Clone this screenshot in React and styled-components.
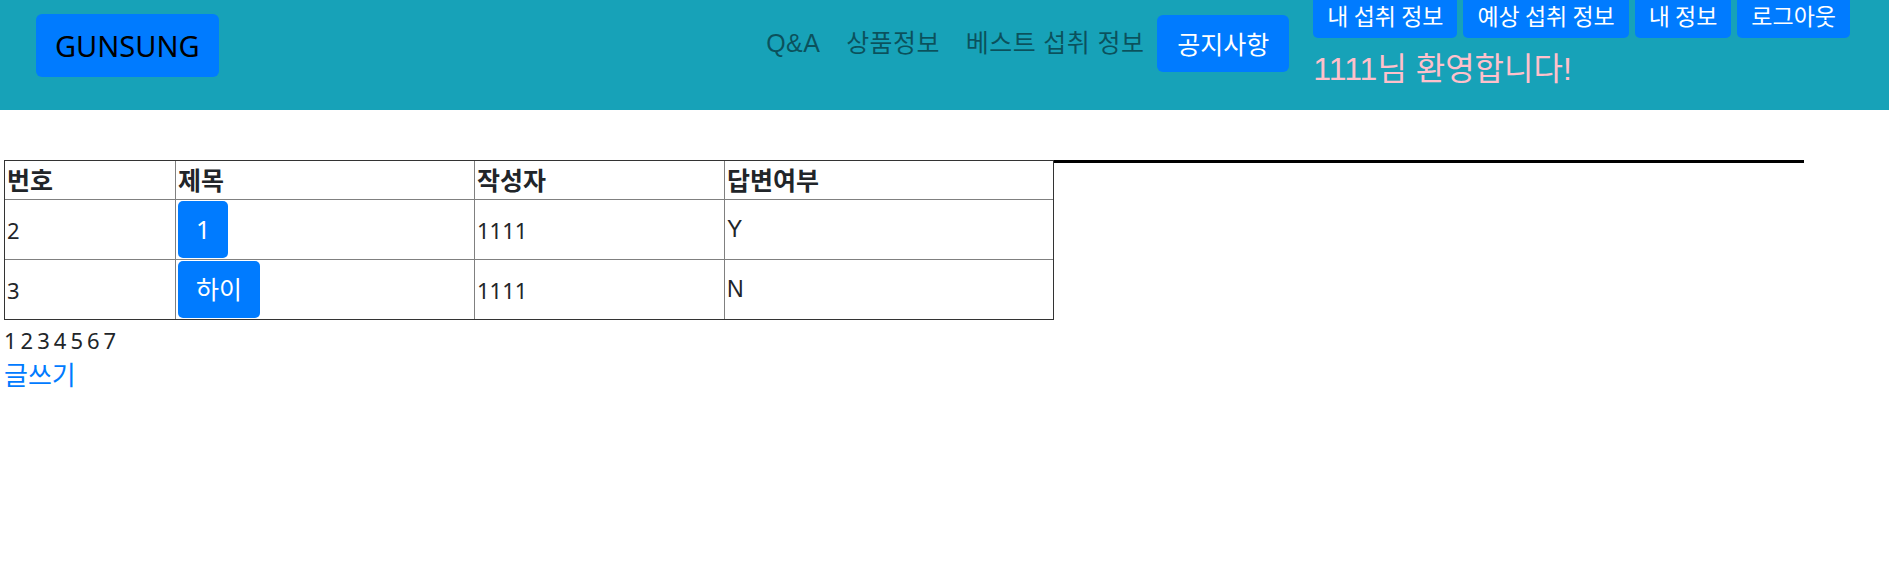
import React from 'react';
import styled, { createGlobalStyle } from 'styled-components';

const GlobalStyle = createGlobalStyle`
  * {
    box-sizing: border-box;
  }
  html, body {
    margin: 0;
    padding: 0;
    background: #fff;
  }
  body {
    font-family: "Noto Sans", "Noto Sans CJK KR", sans-serif;
    color: #212529;
  }
`;

const Header = styled.header`
  height: 110px;
  background-color: #17a2b8;
  display: flex;
  align-items: flex-start;
  padding: 14px 39px 0 36px;
`;

const Logo = styled.a`
  display: block;
  background-color: #007bff;
  color: #000;
  font-size: 29px;
  line-height: 45px;
  padding: 9px 19px;
  border-radius: 6px;
  text-decoration: none;
`;

const Nav = styled.nav`
  margin-left: auto;
  margin-top: 1px;
  display: flex;
  align-items: center;
  font-family: "Liberation Sans", "Noto Sans CJK KR", sans-serif;
`;

const NavLink = styled.a`
  padding: 0 13px;
  font-size: 25px;
  line-height: 57px;
  letter-spacing: 0.4px;
  color: rgba(0, 0, 0, 0.5);
  text-decoration: none;
`;

const NoticeButton = styled.button`
  background-color: #007bff;
  color: #fff;
  border: none;
  border-radius: 6px;
  font-family: "Noto Sans CJK KR", sans-serif;
  font-size: 25px;
  line-height: 33px;
  padding: 12px 20px;
`;

const UserArea = styled.div`
  margin-left: 24px;
  margin-top: -21px;
  display: flex;
  flex-direction: column;
`;

const UserButtons = styled.div`
  display: flex;
  gap: 6px;
`;

const SmallButton = styled.button`
  background-color: #007bff;
  color: #fff;
  border: none;
  border-radius: 5px;
  font-family: "Noto Sans CJK KR", sans-serif;
  font-size: 23px;
  line-height: 27px;
  padding: 9px 14px;
`;

const Welcome = styled.p`
  margin: 13px 0 0;
  font-family: "Liberation Sans", "Noto Sans CJK KR", sans-serif;
  font-size: 32px;
  line-height: 36px;
  color: pink;
`;

const Main = styled.main`
  padding: 50px 4px 0;
  font-size: 22px;
`;

const BoardRow = styled.div`
  display: flex;
  align-items: flex-start;
  width: 1800px;
`;

const Rule = styled.div`
  flex: 1;
  border-top: 3px solid #000;
`;

const Table = styled.table`
  border-collapse: separate;
  border-spacing: 0;
  border: 1px solid #333;
  table-layout: fixed;
  width: 1050px;
`;

const Th = styled.th`
  height: 38px;
  padding: 0 2px;
  text-align: left;
  font-weight: 700;
  font-size: 25px;
  line-height: 36px;
  border-left: 1px solid #808080;

  &:first-child {
    border-left: none;
  }
`;

const Td = styled.td`
  height: 60px;
  padding: 1px 2px;
  vertical-align: middle;
  border-left: 1px solid #808080;
  border-top: 1px solid #808080;
  font-family: ${(p) => (p.$arial ? '"Liberation Sans", sans-serif' : 'inherit')};
  font-size: ${(p) => (p.$arial ? '23px' : 'inherit')};

  &:first-child {
    border-left: none;
  }
`;

const TitleButton = styled.button`
  background-color: #007bff;
  color: #fff;
  border: none;
  border-radius: 5px;
  font-family: "Noto Sans", "Noto Sans CJK KR", sans-serif;
  font-size: 25px;
  line-height: 33px;
  padding: 12px 18px;
`;

const Pager = styled.div`
  margin-top: 3px;
  line-height: 35px;
  display: flex;
  gap: 4px;
`;

const PageNum = styled.span`
  color: #212529;
`;

const WriteLink = styled.a`
  display: block;
  font-size: 26px;
  line-height: 35px;
  color: #007bff;
  text-decoration: none;
`;

const posts = [
  { no: 2, title: '1', writer: '1111', answered: 'Y' },
  { no: 3, title: '하이', writer: '1111', answered: 'N' },
];

export default function App() {
  return (
    <>
      <GlobalStyle />
      <Header>
        <Logo>GUNSUNG</Logo>
        <Nav>
          <NavLink>Q&amp;A</NavLink>
          <NavLink>상품정보</NavLink>
          <NavLink>베스트 섭취 정보</NavLink>
          <NoticeButton>공지사항</NoticeButton>
        </Nav>
        <UserArea>
          <UserButtons>
            <SmallButton>내 섭취 정보</SmallButton>
            <SmallButton>예상 섭취 정보</SmallButton>
            <SmallButton>내 정보</SmallButton>
            <SmallButton>로그아웃</SmallButton>
          </UserButtons>
          <Welcome>1111님 환영합니다!</Welcome>
        </UserArea>
      </Header>
      <Main>
        <BoardRow>
          <Table>
            <colgroup>
              <col style={{ width: 170 }} />
              <col style={{ width: 299 }} />
              <col style={{ width: 250 }} />
              <col style={{ width: 329 }} />
            </colgroup>
            <thead>
              <tr>
                <Th>번호</Th>
                <Th>제목</Th>
                <Th>작성자</Th>
                <Th>답변여부</Th>
              </tr>
            </thead>
            <tbody>
              {posts.map((p) => (
                <tr key={p.no}>
                  <Td>{p.no}</Td>
                  <Td>
                    <TitleButton>{p.title}</TitleButton>
                  </Td>
                  <Td>{p.writer}</Td>
                  <Td $arial>{p.answered}</Td>
                </tr>
              ))}
            </tbody>
          </Table>
          <Rule />
        </BoardRow>
        <Pager>
          {[1, 2, 3, 4, 5, 6, 7].map((n) => (
            <PageNum key={n}>{n}</PageNum>
          ))}
        </Pager>
        <WriteLink>글쓰기</WriteLink>
      </Main>
    </>
  );
}
